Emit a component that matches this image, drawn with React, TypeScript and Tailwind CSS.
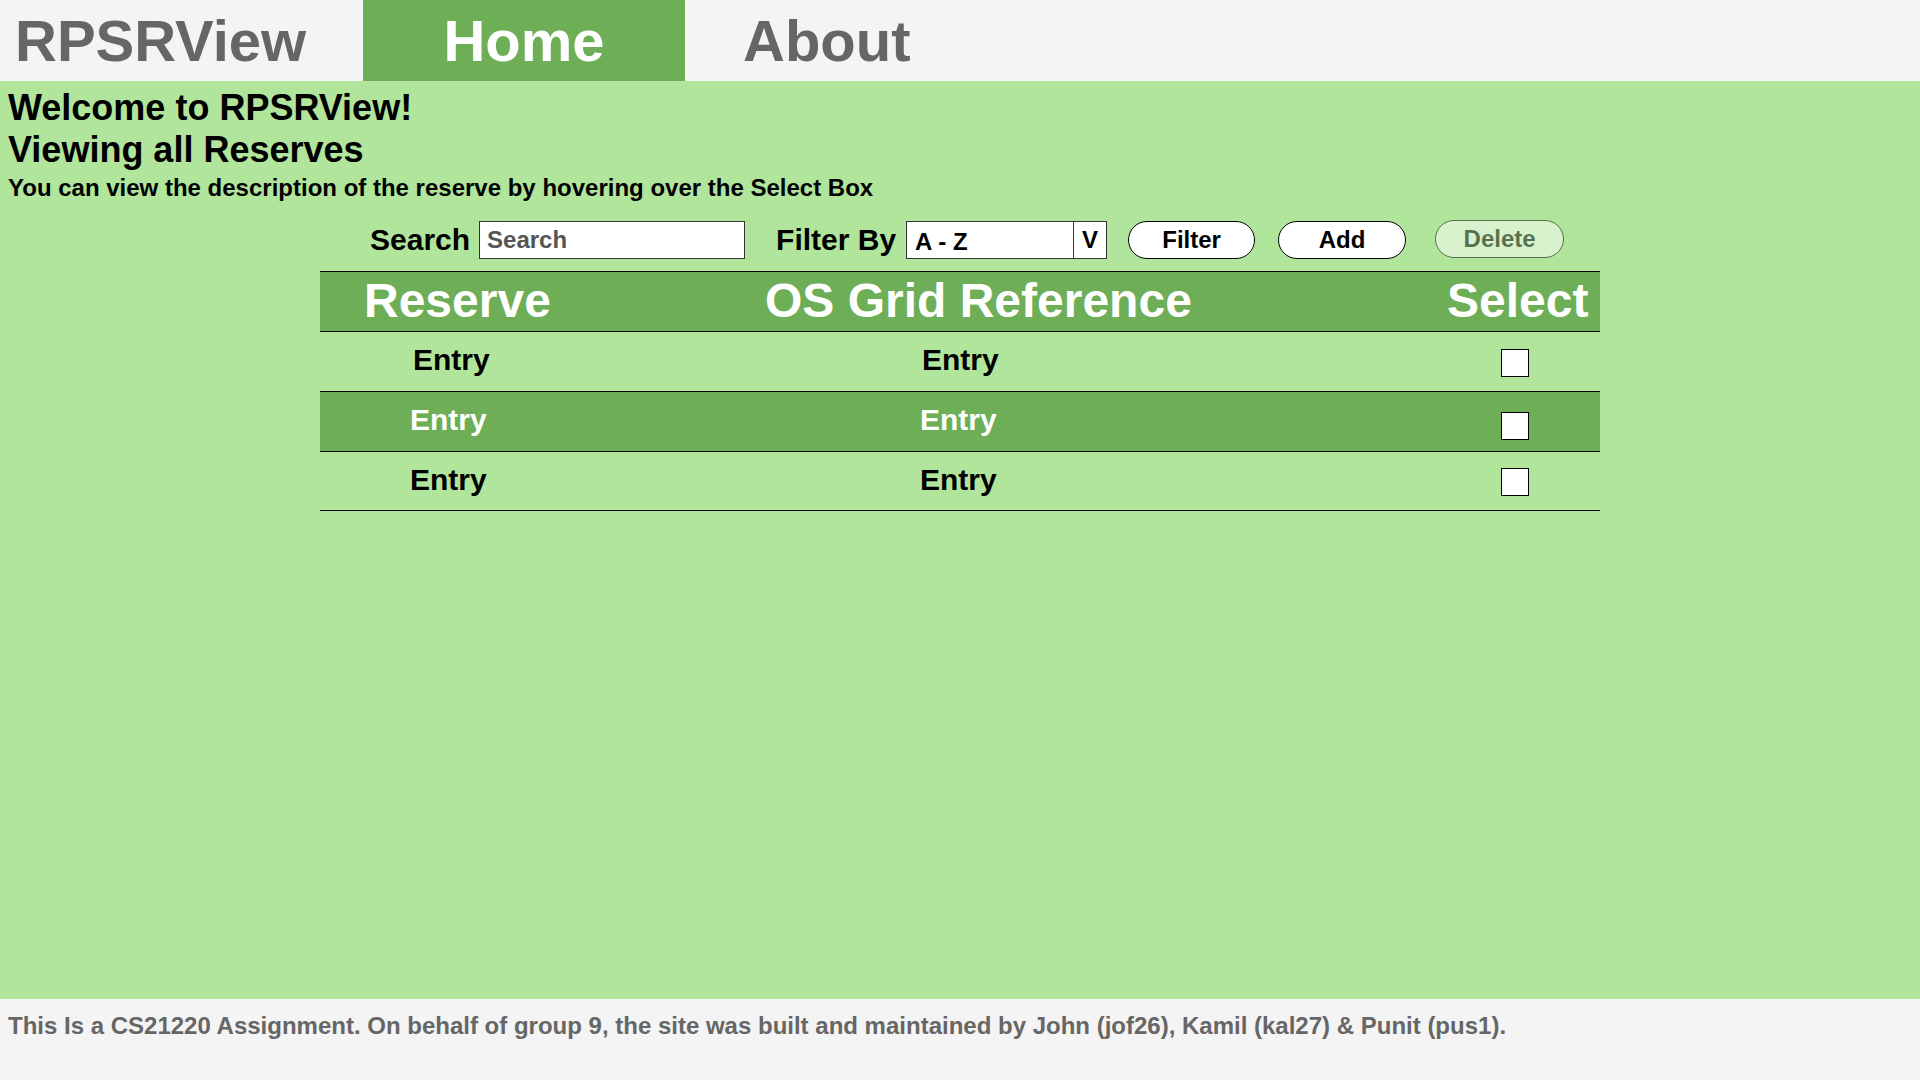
import React from "react";

const rows = [
  { dark: false, p1: "pl-[93px]", p2: "pl-[282px]", cb: "mt-[4px]" },
  { dark: true, p1: "pl-[90px]", p2: "pl-[280px]", cb: "mt-[10px]" },
  { dark: false, p1: "pl-[90px]", p2: "pl-[280px]", cb: "mt-[2px]" },
];

export default function App() {
  return (
    <div className="flex flex-col w-[1920px] h-[1080px] font-['Liberation_Sans',Arial,sans-serif] font-bold">
      <header className="flex h-[81px] bg-[#f4f4f4] items-stretch shrink-0">
        <div className="flex items-center pl-[15px] w-[363px] text-[58px] text-[#666666]">RPSRView</div>
        <div className="flex items-center justify-center w-[322px] bg-[#6dae57] text-white text-[58px]">Home</div>
        <div className="flex items-center pl-[58px] text-[58px] text-[#666666]">About</div>
      </header>
      <main className="flex-1 bg-[#b0e59b] pt-[6px]">
        <div className="pl-2 text-[36px] leading-[41.4px] text-black">Welcome to RPSRView!</div>
        <div className="pl-2 pt-[1px] text-[36px] leading-[41.4px] text-black">Viewing all Reserves</div>
        <div className="pl-2 pt-[3px] text-[24px] leading-[27px] text-black">You can view the description of the reserve by hovering over the Select Box</div>
        <div className="flex items-center pl-[370px] mt-[20px] h-[38px]">
          <span className="text-[30px] text-black">Search</span>
          <div className="ml-[9px] w-[266px] h-[38px] bg-white border border-[#333] flex items-center pl-[7px] text-[24px] text-[#555]">Search</div>
          <span className="ml-[31px] text-[30px] text-black">Filter By</span>
          <div className="ml-[10px] w-[201px] h-[38px] bg-white border border-[#333] flex items-stretch text-[24px] text-black">
            <div className="flex-1 flex items-center pl-[8px] pt-[4px]">A - Z</div>
            <div className="w-[33px] border-l border-[#333] flex items-center justify-center">V</div>
          </div>
          <button className="ml-[21px] w-[127px] h-[38px] rounded-full bg-white border border-black text-[24px] text-black">Filter</button>
          <button className="ml-[23px] w-[128px] h-[38px] rounded-full bg-white border border-black text-[24px] text-black">Add</button>
          <button className="ml-[29px] w-[129px] h-[38px] -mt-[2px] rounded-full bg-white border border-black text-[24px] text-black opacity-50">Delete</button>
        </div>
        <div className="w-[1280px] mx-auto mt-[12px]">
          <div className="flex items-center h-[60px] border-t border-black bg-[#6dae57] text-white text-[48px]">
            <div className="w-[320px] pl-[44px]">Reserve</div>
            <div className="w-[740px] pl-[125px]">OS Grid Reference</div>
            <div className="flex-1 pl-[67px]">Select</div>
          </div>
          {rows.map((r, i) => (
            <div
              key={i}
              className={
                "flex items-center h-[60px] border-t border-black text-[30px] " +
                (r.dark ? "bg-[#6dae57] text-white" : "bg-[#b0e59b] text-black") +
                (i === rows.length - 1 ? " border-b" : "")
              }
            >
              <div className={"w-[320px] pb-[3px] " + r.p1}>Entry</div>
              <div className={"w-[740px] pb-[3px] " + r.p2}>Entry</div>
              <div className="flex-1 pl-[121px]">
                <div className={"w-[28px] h-[28px] bg-white border border-black " + r.cb}></div>
              </div>
            </div>
          ))}
        </div>
      </main>
      <footer className="h-[81px] shrink-0 bg-[#f4f4f4] pl-2 pt-[9px] text-[24px] text-[#666666]">
        This Is a CS21220 Assignment. On behalf of group 9, the site was built and maintained by John (jof26), Kamil (kal27) &amp; Punit (pus1).
      </footer>
    </div>
  );
}
